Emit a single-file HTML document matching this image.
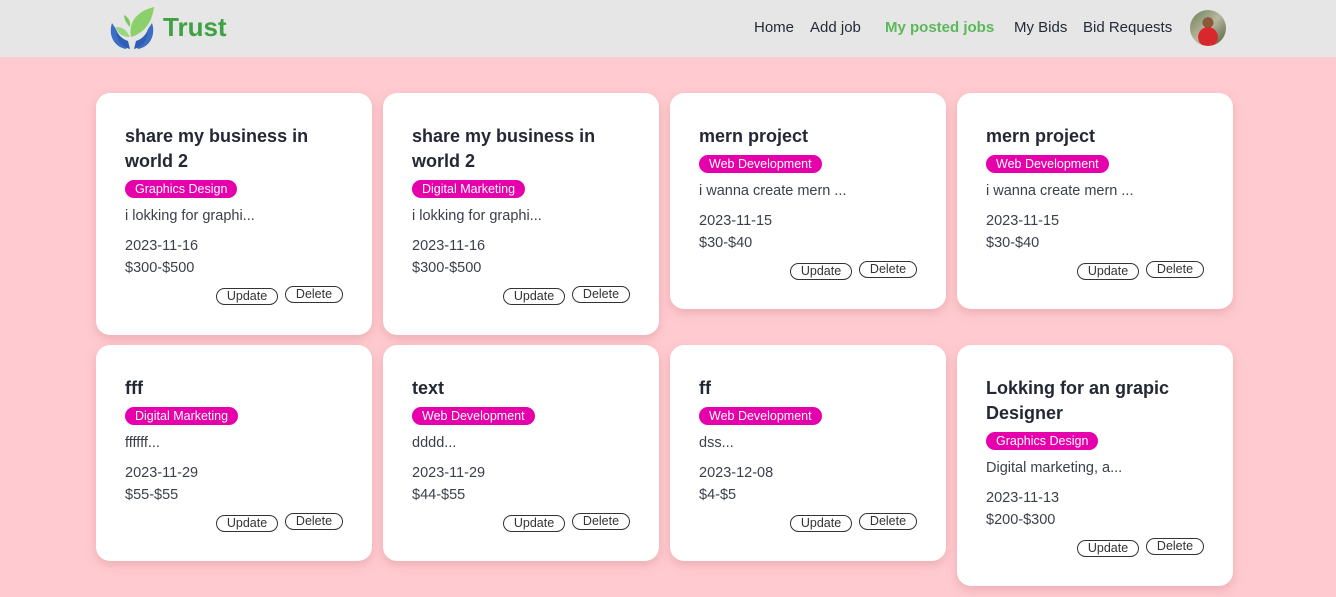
<!DOCTYPE html>
<html><head><meta charset="utf-8"><style>
*{box-sizing:border-box;margin:0;padding:0}
body{width:1336px;height:597px;overflow:hidden;background:#ffcbd0;font-family:"Liberation Sans",sans-serif;color:#252a36}
.nav{height:57px;background:#e5e6e5;position:relative}
.logo{position:absolute;left:108px;top:5px}
.brand{position:absolute;left:163px;top:12px;font-size:26px;font-weight:bold;color:#3ea243}
.links{position:absolute;top:19px;font-size:15px;color:#252a36}
.links span{position:absolute;white-space:nowrap}
.av{position:absolute;left:1190px;top:10px;width:36px;height:36px;border-radius:50%;background:radial-gradient(circle at 50% 75%,#d8282c 0 30%,transparent 31%),radial-gradient(circle at 50% 35%,#8a5a3a 0 18%,transparent 19%),linear-gradient(135deg,#6d7d55,#b8b8a0,#4d5a3a)}
.card{position:absolute;width:276px;background:#fff;border-radius:14px;padding:31px 29px 0 29px;box-shadow:0 4px 10px rgba(200,120,130,.35)}
.t{font-size:18px;font-weight:bold;line-height:25px;color:#232834}
.b{display:inline-block;margin-top:6px;height:18px;line-height:18px;padding:0 10px;border-radius:9px;background:#e600ab;color:#fff;font-size:12.5px}
.d{margin-top:8px;font-size:14.5px;line-height:20px;color:#3a3f4a}
.dt{margin-top:9px;font-size:14.5px;line-height:22px;color:#3a3f4a}
.btns{position:relative;height:20px;margin-top:7px}
.btn{position:absolute;height:17px;border:1px solid #333;border-radius:9px;font-size:12.5px;line-height:15px;text-align:center;color:#333;background:#fff}
.u{right:65px;width:62px;top:2px}.x{right:0;width:58px;top:0}
</style></head><body>
<div class="nav">
<svg class="logo" width="48" height="46" viewBox="0 0 48 46">
<path d="M4 18 C0 30 6 42 18 44 L20 40 C12 38 8 32 8 24 Z" fill="#3c6fc4"/>
<path d="M8 24 C10 30 14 34 20 36 L22 44 C14 42 8 36 8 24Z" fill="#2f5fb4"/>
<path d="M44 18 C48 30 42 42 30 44 L28 40 C36 38 40 32 40 24 Z" fill="#3c6fc4"/>
<path d="M40 24 C38 30 34 34 28 36 L26 44 C34 42 40 36 40 24Z" fill="#2f5fb4"/>
<path d="M23 32 C20 16 30 6 46 2 C44 18 36 28 23 32Z" fill="#8bd06a"/>
<path d="M22 32 C18 24 14 22 8 22 C10 30 16 32 22 32Z" fill="#9bd77c"/>
<path d="M22 22 C18 18 16 14 16 10 C20 12 23 16 22 22Z" fill="#7cc65a"/>
</svg>
<div class="brand">Trust</div>
<div class="links">
<span style="left:754px">Home</span>
<span style="left:810px">Add job</span>
<span style="left:885px;color:#5cb85c;font-weight:bold">My posted jobs</span>
<span style="left:1014px">My Bids</span>
<span style="left:1083px">Bid Requests</span>
</div>
<div class="av"></div>
</div>

<div class="card" style="left:96px;top:93px;height:242px"><div class="t">share my business in world 2</div><div class="b">Graphics Design</div><div class="d">i lokking for graphi...</div><div class="dt">2023-11-16<br>$300-$500</div><div class="btns"><div class="btn u">Update</div><div class="btn x">Delete</div></div></div>
<div class="card" style="left:383px;top:93px;height:242px"><div class="t">share my business in world 2</div><div class="b">Digital Marketing</div><div class="d">i lokking for graphi...</div><div class="dt">2023-11-16<br>$300-$500</div><div class="btns"><div class="btn u">Update</div><div class="btn x">Delete</div></div></div>
<div class="card" style="left:670px;top:93px;height:216px"><div class="t">mern project</div><div class="b">Web Development</div><div class="d">i wanna create mern ...</div><div class="dt">2023-11-15<br>$30-$40</div><div class="btns"><div class="btn u">Update</div><div class="btn x">Delete</div></div></div>
<div class="card" style="left:957px;top:93px;height:216px"><div class="t">mern project</div><div class="b">Web Development</div><div class="d">i wanna create mern ...</div><div class="dt">2023-11-15<br>$30-$40</div><div class="btns"><div class="btn u">Update</div><div class="btn x">Delete</div></div></div>

<div class="card" style="left:96px;top:345px;height:216px"><div class="t">fff</div><div class="b">Digital Marketing</div><div class="d">ffffff...</div><div class="dt">2023-11-29<br>$55-$55</div><div class="btns"><div class="btn u">Update</div><div class="btn x">Delete</div></div></div>
<div class="card" style="left:383px;top:345px;height:216px"><div class="t">text</div><div class="b">Web Development</div><div class="d">dddd...</div><div class="dt">2023-11-29<br>$44-$55</div><div class="btns"><div class="btn u">Update</div><div class="btn x">Delete</div></div></div>
<div class="card" style="left:670px;top:345px;height:216px"><div class="t">ff</div><div class="b">Web Development</div><div class="d">dss...</div><div class="dt">2023-12-08<br>$4-$5</div><div class="btns"><div class="btn u">Update</div><div class="btn x">Delete</div></div></div>
<div class="card" style="left:957px;top:345px;height:241px"><div class="t">Lokking for an grapic Designer</div><div class="b">Graphics Design</div><div class="d">Digital marketing, a...</div><div class="dt">2023-11-13<br>$200-$300</div><div class="btns"><div class="btn u">Update</div><div class="btn x">Delete</div></div></div>
</body></html>
